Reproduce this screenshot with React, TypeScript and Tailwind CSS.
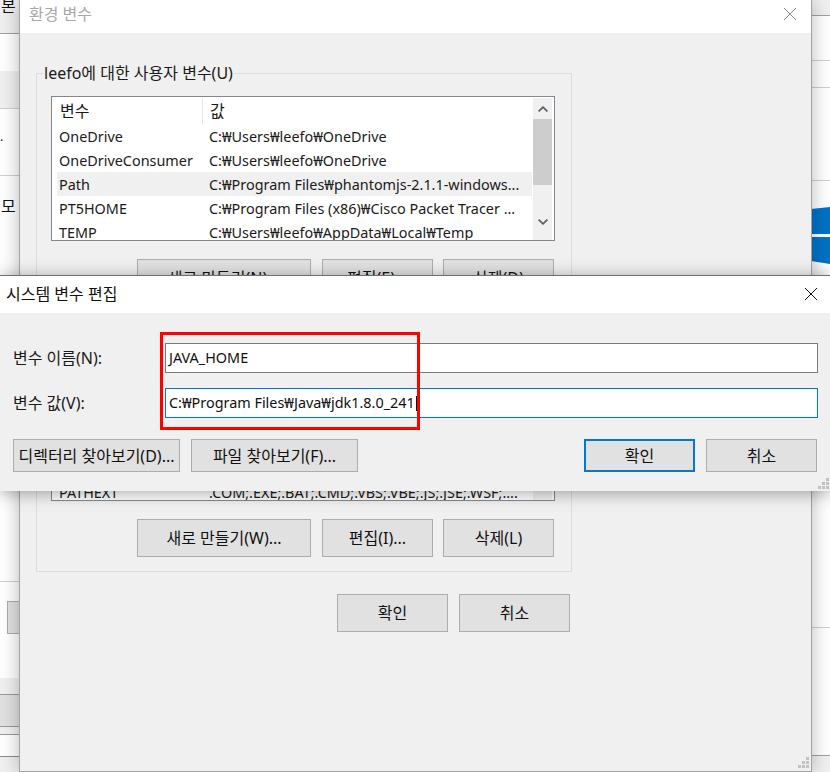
const fontClass = "font-['Noto_Sans','Noto_Sans_CJK_KR',sans-serif]";

function WinButton({
  label,
  className,
  primary,
}: {
  label: string;
  className: string;
  primary?: boolean;
}) {
  return (
    <button
      className={`flex shrink-0 items-center justify-center bg-[#e1e1e1] text-[16px] text-[#111] ${
        primary ? "border-2 border-[#0078d7]" : "border border-[#adadad]"
      } ${className}`}
    >
      {label}
    </button>
  );
}

function CloseIcon({ className }: { className: string }) {
  return (
    <svg viewBox="0 0 14 14" fill="none" stroke="currentColor" strokeWidth="1" className={className}>
      <path d="M1 1L13 13M13 1L1 13" />
    </svg>
  );
}

function Grip({ className }: { className: string }) {
  return (
    <svg viewBox="0 0 11 11" fill="#c2c2c2" className={className}>
      <rect x="8" y="0" width="3" height="3" />
      <rect x="4" y="4" width="3" height="3" />
      <rect x="8" y="4" width="3" height="3" />
      <rect x="0" y="8" width="3" height="3" />
      <rect x="4" y="8" width="3" height="3" />
      <rect x="8" y="8" width="3" height="3" />
    </svg>
  );
}

const userVars = [
  { name: "OneDrive", value: "C:₩Users₩leefo₩OneDrive" },
  { name: "OneDriveConsumer", value: "C:₩Users₩leefo₩OneDrive" },
  { name: "Path", value: "C:₩Program Files₩phantomjs-2.1.1-windows...", active: true },
  { name: "PT5HOME", value: "C:₩Program Files (x86)₩Cisco Packet Tracer ..." },
  { name: "TEMP", value: "C:₩Users₩leefo₩AppData₩Local₩Temp" },
];

function VarRow({ name, value, active }: { name: string; value: string; active?: boolean }) {
  return (
    <div className={`flex h-6 shrink-0 items-center whitespace-nowrap pt-[1px] text-[14.4px] text-[#1a1a1a] ${active ? "bg-[#f0f0f0]" : ""}`}>
      <span className="w-[152px] shrink-0 pl-[2px]">{name}</span>
      <span>{value}</span>
    </div>
  );
}

function UserVarList() {
  return (
    <div className="flex h-[145px] w-[504px] overflow-hidden border border-[#828790] bg-white pl-[5px] pt-[1px] pr-[2px]">
      <div className="flex w-[476px] flex-col">
        <div className="flex h-[26px] shrink-0 items-center text-[16px] text-[#1a1a1a]">
          <span className="h-full w-[146px] border-r border-[#e5e5e5] pl-[3px] leading-[26px]">변수</span>
          <span className="pl-[7px]">값</span>
        </div>
        {userVars.map((v) => (
          <VarRow key={v.name} {...v} />
        ))}
      </div>
      <div className="ml-[1px] flex w-[19px] flex-col bg-[#f0f0f0]">
        <div className="flex h-[21px] items-center justify-center text-[#606060]">
          <svg viewBox="0 0 10 6" fill="none" stroke="currentColor" strokeWidth="1.8" className="h-[6px] w-[10px]">
            <path d="M0.6 5.4L5 1.2L9.4 5.4" />
          </svg>
        </div>
        <div className="h-[66px] bg-[#cdcdcd]" />
        <div className="flex flex-1 items-center justify-center pt-[18px] text-[#606060]">
          <svg viewBox="0 0 10 6" fill="none" stroke="currentColor" strokeWidth="1.8" className="h-[6px] w-[10px]">
            <path d="M0.6 0.6L5 4.8L9.4 0.6" />
          </svg>
        </div>
      </div>
    </div>
  );
}

function SystemVarList() {
  return (
    <div className="flex h-[150px] w-[504px] flex-col justify-end overflow-hidden border border-[#828790] bg-white pl-[5px] pr-[2px]">
      <div className="flex h-[20px] items-start">
        <div className="w-[476px]">
          <VarRow name="PATHEXT" value=".COM;.EXE;.BAT;.CMD;.VBS;.VBE;.JS;.JSE;.WSF;...." />
        </div>
        <div className="ml-[1px] h-full w-[19px] bg-[#f0f0f0]" />
      </div>
    </div>
  );
}

function ActionButtons({ labels }: { labels: [string, string, string] }) {
  return (
    <div className="mt-[18px] flex pl-[86px]">
      <WinButton label={labels[0]} className="h-[38px] w-[174px]" />
      <WinButton label={labels[1]} className="ml-[11px] h-[38px] w-[111px]" />
      <WinButton label={labels[2]} className="ml-[10px] h-[38px] w-[111px]" />
    </div>
  );
}

function LeftEdge() {
  return (
    <div className="flex w-[19px] flex-col overflow-hidden bg-white text-[16px] text-[#111]">
      <div className="h-[34px] shrink-0 overflow-hidden whitespace-nowrap border-b border-[#a0a0a0] bg-[#f0f0f0] pl-[1px] leading-[12px]">본</div>
      <div className="mt-[37px] h-[38px] shrink-0 border-b border-[#cfcfcf] bg-[#f0f0f0]" />
      <div className="h-[67px] shrink-0 border-b border-[#cfcfcf] pt-[22px] text-[12px] leading-[12px]">.</div>
      <div className="h-[406px] shrink-0 whitespace-nowrap border-b border-[#cfcfcf] pl-[1px] pt-[20px] leading-[20px]">모</div>
      <div className="ml-[7px] mt-[19px] h-[33px] shrink-0 border border-r-0 border-[#adadad] bg-[#e1e1e1]" />
      <div className="mt-[44px] h-[16px] shrink-0 bg-[#f0f0f0]" />
      <div className="h-[33px] shrink-0 border-y border-[#9a9a9a] bg-[#e1e1e1]" />
      <div className="h-[8px] shrink-0 border-b border-[#9a9a9a] bg-[#f0f0f0]" />
      <div className="h-[22px] shrink-0 border-b border-[#8a8a8a]" />
      <div className="flex-1 bg-[#f0f0f0]" />
    </div>
  );
}

function RightEdge() {
  return (
    <div className="flex w-[19px] flex-col overflow-hidden bg-white">
      <div className="h-[16px] shrink-0 border-b border-[#a0a0a0] bg-[#f0f0f0]" />
      <div className="h-[45px] shrink-0 border-b border-[#cfcfcf]" />
      <div className="h-[27px] shrink-0 border-b border-[#cfcfcf]" />
      <div className="h-[93px] shrink-0 border-b border-[#cfcfcf]" />
      <svg viewBox="0 0 19 57" className="mt-[26px] h-[57px] w-[19px] shrink-0" fill="#0072c6">
        <polygon points="0,2 19,0 19,27 0,27" />
        <polygon points="0,30 19,30 19,57 0,54" />
      </svg>
      <div className="mt-[12px] h-[352px] shrink-0 border-b border-[#cfcfcf]" />
      <div className="mt-[127px] flex-1 border-t border-[#a0a0a0] bg-[#f0f0f0]" />
    </div>
  );
}

function EnvWindow() {
  return (
    <div className="absolute left-[19px] top-0 flex h-[772px] w-[793px] flex-col border-x border-b border-[#a3a3a3] bg-[#f0f0f0] shadow-[0_0_18px_rgba(0,0,0,0.28)]">
      <div className="flex h-[33px] shrink-0 items-center justify-between bg-white pb-[5px] pl-[9px] pr-[14px] text-[16px] text-[#a8a8a8]">
        <span>환경 변수</span>
        <CloseIcon className="h-[14px] w-[14px] text-[#8a8a8a]" />
      </div>
      <div className="relative ml-[16px] mt-[40px] h-[238px] w-[536px] shrink-0 border border-[#dcdcdc] pl-[14px] pt-[22px]">
        <span className="absolute left-[6px] top-[-11px] bg-[#f0f0f0] px-[1px] text-[16px] leading-[20px] text-[#1a1a1a]">
          leefo에 대한 사용자 변수(U)
        </span>
        <UserVarList />
        <ActionButtons labels={["새로 만들기(N)...", "편집(E)...", "삭제(D)"]} />
      </div>
      <div className="ml-[16px] mt-[24px] h-[237px] w-[536px] shrink-0 border border-[#dcdcdc] pl-[14px] pt-[15px]">
        <SystemVarList />
        <ActionButtons labels={["새로 만들기(W)...", "편집(I)...", "삭제(L)"]} />
      </div>
      <div className="ml-[317px] mt-[22px] flex gap-[11px]">
        <WinButton label="확인" className="h-[38px] w-[111px]" />
        <WinButton label="취소" className="h-[38px] w-[111px]" />
      </div>
      <Grip className="absolute bottom-[3px] right-[2px] h-[11px] w-[11px]" />
    </div>
  );
}

function EditDialog() {
  return (
    <div className="absolute left-0 top-[275px] flex h-[216px] w-[830px] flex-col border-t border-[#6e6e6e] bg-[#f0f0f0] shadow-[0_2px_16px_rgba(0,0,0,0.35)]">
      <div className="flex h-[37px] shrink-0 items-center justify-between bg-white pb-[1px] pl-[6px] pr-[12px] text-[16px] text-[#111]">
        <span>시스템 변수 편집</span>
        <CloseIcon className="h-[14px] w-[14px] text-[#111]" />
      </div>
      <div className="mt-[30px] flex items-center pl-[13px]">
        <label className="w-[152px] text-[16px] text-[#1a1a1a]">변수 이름(N):</label>
        <div className="flex h-[30px] w-[653px] items-center border border-[#7a7a7a] bg-white pl-[3px] text-[14.4px] text-[#111]">
          JAVA_HOME
        </div>
      </div>
      <div className="mt-[15px] flex items-center pl-[13px]">
        <label className="w-[152px] text-[16px] text-[#1a1a1a]">변수 값(V):</label>
        <div className="flex h-[30px] w-[653px] items-center border border-[#0078d7] bg-white pl-[3px] text-[14.4px] text-[#111]">
          C:₩Program Files₩Java₩jdk1.8.0_241
          <span className="ml-[1px] h-[15px] w-[1px] bg-black" />
        </div>
      </div>
      <div className="mt-[21px] flex pl-[13px]">
        <WinButton label="디렉터리 찾아보기(D)..." className="h-[33px] w-[167px]" />
        <WinButton label="파일 찾아보기(F)..." className="ml-[11px] h-[33px] w-[167px]" />
        <WinButton label="확인" primary className="ml-[226px] h-[33px] w-[111px]" />
        <WinButton label="취소" className="ml-[11px] h-[33px] w-[111px]" />
      </div>
      <Grip className="absolute bottom-[2px] right-[1px] h-[11px] w-[11px]" />
      <div className="absolute left-[160px] top-[56px] h-[98px] w-[260px] border-[3px] border-[#ff0000]" />
    </div>
  );
}

export default function App() {
  return (
    <div className={`relative flex h-[772px] w-[830px] justify-between overflow-hidden bg-white ${fontClass}`}>
      <LeftEdge />
      <RightEdge />
      <EnvWindow />
      <EditDialog />
    </div>
  );
}
